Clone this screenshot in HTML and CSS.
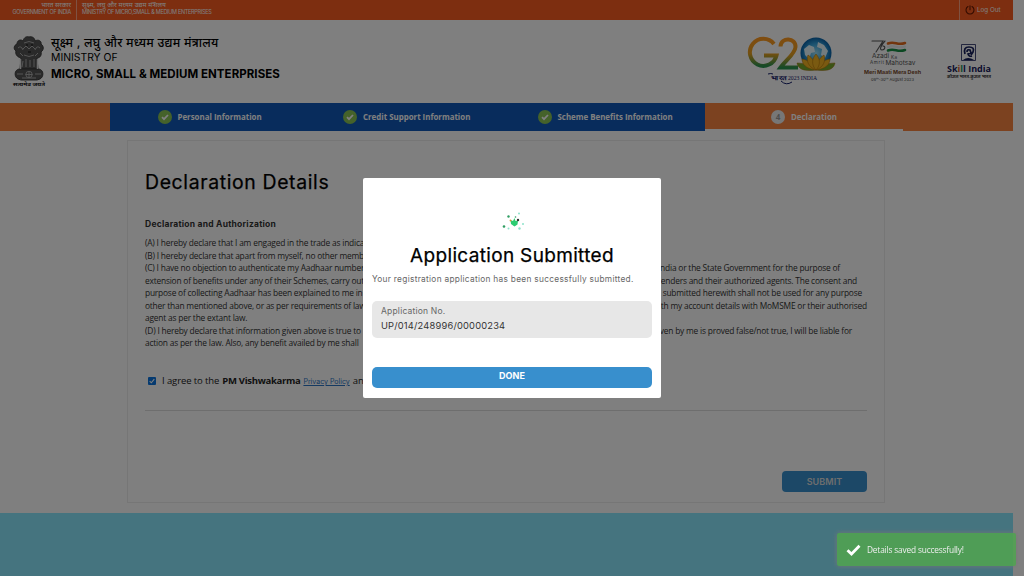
FILE: index.html
```html
<!DOCTYPE html>
<html lang="en">
<head>
<meta charset="utf-8">
<title>PM Vishwakarma - Declaration</title>
<link rel="stylesheet" href="styles.css">
</head>
<body>
<div class="page">
  <div class="topbar">
    <div class="gov gov-left"><span class="hi">भारत सरकार</span><span class="goi">GOVERNMENT OF INDIA</span></div>
    <div class="gov gov-right"><span class="hi hi2">सूक्ष्म, लघु और मध्यम उद्यम मंत्रालय</span><span class="msme">MINISTRY OF MICRO,SMALL &amp; MEDIUM ENTERPRISES</span></div>
    <div class="logout">
      <svg width="10" height="10" viewBox="0 0 10 10" fill="none" stroke="#661800" stroke-width="1.1" stroke-linecap="round"><path d="M3 1.6A4 4 0 1 0 7 1.6M5 .7v4"/></svg>
      <span>Log Out</span>
    </div>
  </div>
  <header class="header">
    <svg class="emblem" width="34" height="54" viewBox="0 0 34 54">
      <g fill="#555" stroke="#333" stroke-width=".9">
        <path d="M9 23C5 22 3 19 4 16C1 14 2 10 5 9C5 5 9 4 11 6C12 2 15 1 17 2C20 1 23 3 23 6C26 4 30 6 29 9C32 11 32 15 29 17C30 20 28 23 25 23L26 34H8Z"/>
        <path d="M7 34C2 35 2 42 6 44L9 45H25L28 44C32 42 32 35 27 34Z"/>
      </g>
      <g fill="none" stroke="#aaa" stroke-width="1">
        <circle cx="17" cy="39.5" r="3.2"/><path d="M17 36v7M13.500 39.500h7M5 39h6M23 39h6M10 43h14"/>
        <path d="M12 8q5-3 10 0M11 14l3-3 3 3 3-3 3 3M6 13q3-3 5 2M28 13q-3-3-5 2M12 20q5 3 10 0M14 24v8M18 25v7M22 24v8M11 26l-1 6M8 18l3 3M26 18l-3 3"/>
        <path d="M8.500 24v10M25.500 24v10" stroke="#ddd" stroke-width="1.500"/>
      </g>
      <path d="M14 10h2M19 10h2M16 17h3" stroke="#111"/>
      <text x="17" y="51" text-anchor="middle" textLength="32" lengthAdjust="spacingAndGlyphs" class="motto">सत्यमेव जयते</text>
    </svg>
    <div class="ministry">
      <span class="m-hi">सूक्ष्म , लघु और मध्यम उद्यम मंत्रालय</span>
      <span class="m-of">MINISTRY OF</span>
      <span class="m-name">MICRO, SMALL &amp; MEDIUM ENTERPRISES</span>
    </div>
    <div class="logos">
      <svg width="90" height="52" viewBox="0 0 90 52">
        <defs>
          <linearGradient id="g" x1="0" y1="0" x2="0" y2="1"><stop offset="0" stop-color="#ff9a20"/><stop offset=".55" stop-color="#e8a020"/><stop offset="1" stop-color="#2c9450"/></linearGradient>
          <radialGradient id="b"><stop offset="0" stop-color="#9ce0f8"/><stop offset=".6" stop-color="#36a5e0"/><stop offset="1" stop-color="#0862a8"/></radialGradient>
        </defs>
        <g fill="none" stroke="url(#g)" stroke-width="4">
          <path d="M27 9A13.500 13.500 0 1 0 29.500 20.500H17"/>
          <path d="M33.500 11.500C34 1.500 49 2.500 48.500 12C48 19 39 25 33.500 32.500H51"/>
        </g>
        <circle cx="69" cy="18" r="15.500" fill="url(#b)"/>
        <path d="M57 14l5-4 5 2 1 5-4 1-2 6-4-4zM71 7l6 3 4 6-3 7-4-3 1-6-5-2z" fill="#e7f8ff"/>
        <g fill="#f5b422" stroke="#a86e08" stroke-width=".5">
          <path d="M69 35C55 37 51 33 50 28C58 28 65 31 69 35C73 31 80 28 88 28C87 33 83 37 69 35Z" fill="#76a82b"/>
          <path d="M69 35C59 34 55 29 55 24C62 25 68 30 69 35C70 30 76 25 83 24C83 29 79 34 69 35Z"/>
          <path d="M69 35C61 32 59 25 61 20C66 23 69 29 69 35C69 29 72 23 77 20C79 25 77 32 69 35Z"/>
          <path d="M69 35C64 30 65 23 69 19C73 23 74 30 69 35Z"/>
        </g>
        <g class="g20-caption"><text x="24" y="45" textLength="15" lengthAdjust="spacingAndGlyphs" font-weight="bold">भारत</text><text x="41" y="44.500" textLength="29" lengthAdjust="spacingAndGlyphs">2023 INDIA</text></g>
        <path d="M21 39q3-1 5 0M34 46q5 5 11 1" fill="none" stroke="#15206c" stroke-width="1"/>
      </svg>
      <svg width="60" height="44" viewBox="0 0 60 44">
        <g fill="none" stroke-linecap="round">
          <path d="M8 2h11L12 13M21 2c-4 4-6 9-3 9s4-4 1-4" stroke="#555" stroke-width="1.100"/>
          <path d="M24 4.500c7-3 9 2.500 17-.5" stroke="#e46b1c" stroke-width="2.600"/>
          <path d="M24 8c7-3 9 2.500 17-.5" stroke="#eee" stroke-width="2"/>
          <path d="M24 11.500c7-3 9 2.500 17-.5" stroke="#189044" stroke-width="2.600"/>
        </g>
        <g class="azadi"><text x="8" y="19" textLength="17">Azadi</text><text x="27" y="20" textLength="6" class="amrit">Ka</text><text x="6" y="25" textLength="14" class="amrit">Amrit</text><text x="21.500" y="26.300" textLength="30">Mahotsav</text></g>
        <text x="0" y="35" textLength="57" lengthAdjust="spacingAndGlyphs" class="desh">Meri Maati Mera Desh</text>
        <text x="7" y="42" textLength="43" class="dates">09ᵗʰ-30ᵗʰ August 2023</text>
      </svg>
      <svg width="46" height="38" viewBox="0 0 46 38">
        <path d="M15.500 1.500h14v16h-14z" fill="none" stroke="#17205c" stroke-width=".8"/>
        <path d="M19 11q-2-7 4-7t4 5l-2 3M21 9q0-3 3-2l1 3-3 1q1 3 4 2" fill="none" stroke="#17205c" stroke-width="1.700"/>
        <path d="M17 17q5-4 11 0z" fill="#17205c"/>
        <text x="1" y="28.500" textLength="44" lengthAdjust="spacingAndGlyphs" class="skill">Sk<tspan fill="#d8601b">i</tspan><tspan fill="#259556">l</tspan>l India</text>
        <text x="1" y="35" textLength="44" lengthAdjust="spacingAndGlyphs" class="skill-hi">कौशल भारत-कुशल भारत</text>
      </svg>
    </div>
  </header>
  <nav class="steps">
    <div class="step s1"><i class="check"><svg viewBox="0 0 14 14"><path d="M4 7.200l2 2 4-4.200"/></svg></i><span>Personal Information</span></div>
    <div class="step s2"><i class="check"><svg viewBox="0 0 14 14"><path d="M4 7.200l2 2 4-4.200"/></svg></i><span>Credit Support Information</span></div>
    <div class="step s3"><i class="check"><svg viewBox="0 0 14 14"><path d="M4 7.200l2 2 4-4.200"/></svg></i><span>Scheme Benefits Information</span></div>
    <div class="step s4"><i class="num">4</i><span>Declaration</span></div>
  </nav>
  <main class="card">
    <h1>Declaration Details</h1>
    <h2>Declaration and Authorization</h2>
    <div class="terms">
      <p><span>(A) I hereby declare that I am engaged in the trade as indicated</span></p>
      <p><span>(B) I hereby declare that apart from myself, no other member</span></p>
      <p class="e1"><span>(C) I have no objection to authenticate my Aadhaar number</span><span>of India or the State Government for the purpose of</span></p>
      <p class="e2"><span>extension of benefits under any of their Schemes, carry out</span><span>lenders and their authorized agents. The consent and</span></p>
      <p class="e3"><span>purpose of collecting Aadhaar has been explained to me in</span><span>submitted herewith shall not be used for any purpose</span></p>
      <p><span>other than mentioned above, or as per requirements of law</span><span>with my account details with MoMSME or their authorised</span></p>
      <p><span>agent as per the extant law.</span></p>
      <p class="e4"><span>(D) I hereby declare that information given above is true to</span><span>given by me is proved false/not true, I will be liable for</span></p>
      <p><span>action as per the law. Also, any benefit availed by me shall</span></p>
    </div>
    <div class="agree">
      <i class="box"><svg viewBox="0 0 8 8"><path d="M1.700 4.200l1.600 1.600 3-3.600"/></svg></i>
      <span class="ag1">I agree to the</span><b>PM Vishwakarma</b><a>Privacy Policy</a><span>and</span>
    </div>
    <div class="actions"><button class="submit">SUBMIT</button></div>
  </main>
  <footer class="footer"></footer>
</div>
<div class="overlay">
  <section class="modal">
    <svg class="confetti" width="24" height="22" viewBox="0 0 24 22">
      <path d="M8.500 9l2.500 1 1.500-3 1 3 2.500-.5-.5 4-3 2-3.500-2.500z" fill="#2ccc71"/>
      <g fill="#2f9d62"><circle cx="6.500" cy="5.500" r="1.200"/><circle cx="2" cy="15.500" r="1.300"/><circle cx="13.500" cy="6" r=".8"/></g>
      <circle cx="16" cy="9" r="1.200" fill="#333"/><circle cx="8.500" cy="9.500" r=".9" fill="#d99232"/>
      <g fill="#8ee3cb"><circle cx="17" cy="2.500" r="1"/><circle cx="21" cy="13" r="1"/><circle cx="17.500" cy="17.500" r="1.200"/><circle cx="6.500" cy="17.500" r="1"/></g>
    </svg>
    <h3>Application Submitted</h3>
    <p class="note">Your registration application has been successfully submitted.</p>
    <div class="field"><span class="label">Application No.</span><span class="value">UP/014/248996/00000234</span></div>
    <button class="done">DONE</button>
  </section>
</div>
<div class="toast">
  <svg width="15" height="12" viewBox="0 0 15 12"><path d="M1.500 6.200l4 3.800L13.500 1.800" fill="none" stroke="#fff" stroke-width="2.800"/></svg>
  <span>Details saved successfully!</span>
</div>
</body>
</html>
```
FILE: styles.css
```css
* { box-sizing: border-box; }
body { margin: 0; width: 1024px; height: 576px; overflow: hidden; background: #fff; font-family: Inter, "Noto Sans", sans-serif; color: #000; }
span, h1, h2, h3, p, b, a { white-space: nowrap; }
h1, h2, h3, p { margin: 0; }
button { border: 0; padding: 0; font-family: inherit; color: #fff; }
.page { width: 1013px; height: 576px; display: flex; flex-direction: column; }

.topbar { height: 20px; flex: none; display: flex; background: #fa5c20; color: #fff; font-size: 5.5px; letter-spacing: -.3px; }
.gov { display: flex; flex-direction: column; padding-top: 2px; line-height: 7px; }
.gov-left { width: 77px; padding-right: 5px; align-items: flex-end; border-right: 1px solid #ffa584; }
.gov-right { padding-left: 5px; }
.hi { font-size: 6.3px; letter-spacing: 0; }
.hi2 { font-size: 6.6px; }
.logout { margin-left: auto; width: 54px; padding-left: 5px; border-left: 1px solid #ffa584; display: flex; align-items: center; gap: 2px; font-size: 6.3px; letter-spacing: 0; }

.header { height: 83px; flex: none; display: flex; padding: 15px 21px 0 12px; }
.motto { font: bold 5px "Noto Sans", sans-serif; fill: #111; }
.ministry { display: flex; flex-direction: column; margin-left: 5px; color: #000; }
.m-hi { font-size: 12.2px; font-weight: 500; line-height: 15px; letter-spacing: .25px; }
.m-of { font-size: 10.4px; line-height: 15px; }
.m-name { font-size: 11.5px; line-height: 18px; font-weight: 700; letter-spacing: .06px; }
.logos { margin-left: auto; display: flex; align-items: flex-start; }
.logos svg:nth-child(2) { margin: 4px 22px 0 27px; }
.logos svg:nth-child(3) { margin-top: 8px; }
.g20-caption { font: 6px "Liberation Serif", serif; fill: #15206c; }
.azadi { font: 6.5px Inter, sans-serif; fill: #555; }
.amrit { font-size: 4.6px; }
.desh { font: bold 5px Inter, sans-serif; fill: #7a4b2c; }
.dates { font: 4px Inter, sans-serif; fill: #4a4a4a; }
.skill { font: bold 8.5px "Open Sans", sans-serif; fill: #17205c; }
.skill-hi { font: bold 4px "Noto Sans", sans-serif; fill: #333; }

.steps { height: 28px; flex: none; display: flex; padding-left: 110px; background: #f88440; font-family: "Open Sans", sans-serif; font-size: 7.9px; font-weight: 700; color: #fff; }
.step { display: flex; align-items: center; background: #1058b8; gap: 6px; }
.s1 { width: 198px; padding-left: 47.5px; }
.s2 { width: 198px; padding-left: 35px; }
.s3 { width: 199px; padding-left: 31.5px; }
.s4 { width: 198px; padding-left: 66px; padding-top: 2px; background: transparent; border-bottom: 2px solid #fff; }
.check, .num { width: 14px; height: 14px; border-radius: 50%; flex: none; font-style: normal; }
.check { background: #8ac454; }
.check svg { display: block; }
.check path { fill: none; stroke: #fff; stroke-width: 1.8; }
.num { background: #eee; color: #999; text-align: center; line-height: 14px; font-size: 8px; }

.card { margin: 9px 0 0 127px; width: 758px; height: 363px; flex: none; border: 1px solid #ededed; padding: 29px 17px 0; display: flex; flex-direction: column; }
.card h1 { font-size: 19.4px; line-height: 24px; font-weight: 400; letter-spacing: .65px; -webkit-text-stroke: .25px #000; }
.card h2 { margin-top: 23px; font-size: 8.5px; line-height: 14px; font-weight: 700; letter-spacing: .24px; color: #333; }
.terms { margin-top: 6px; font-family: "Open Sans", sans-serif; font-size: 8.4px; line-height: 12.55px; letter-spacing: -.2px; color: #333; }
.terms p { display: flex; justify-content: space-between; height: 12.55px; }
.e1 { padding-right: 27px; }
.e2 { padding-right: 10px; }
.e3 { padding-right: 5px; }
.e4 { padding-right: 15px; }
.agree { height: 61px; flex: none; padding: 24px 0 0 3px; display: flex; align-items: flex-start; gap: 3px; border-bottom: 1px solid #ddd; font-family: "Open Sans", sans-serif; font-size: 9.5px; line-height: 14px; letter-spacing: -.1px; color: #222; }
.agree b { letter-spacing: -.3px; }
.box { width: 8px; height: 8px; margin: 3px 3px 0 0; border-radius: 1px; background: #0b75e0; }
.box svg { display: block; }
.box path { fill: none; stroke: #fff; stroke-width: 1.1; }
.agree a { font-family: Inter, sans-serif; font-size: 7px; line-height: 16px; letter-spacing: 0; color: #2b74c4; text-decoration: underline; }
.actions { margin-top: 60px; display: flex; justify-content: flex-end; }
.submit { width: 85px; height: 21px; border-radius: 4px; background: #3890ce; font-size: 9px; font-weight: 600; letter-spacing: .1px; color: #ddd; }
.footer { margin-top: 10px; flex: 1; background: #8ae8fe; }

.overlay { position: fixed; inset: 0; background: rgba(0,0,0,.5); display: flex; justify-content: center; align-items: center; }
.modal { width: 298px; height: 220px; border-radius: 2px; background: #fff; padding: 33px 9px 0; display: flex; flex-direction: column; }
.confetti { align-self: center; margin-left: 4px; }
.modal h3 { margin-top: 10px; text-align: center; font-size: 19px; line-height: 26px; font-weight: 400; letter-spacing: .33px; -webkit-text-stroke: .25px #000; }
.note { margin-top: 4px; font-size: 8.3px; line-height: 12px; letter-spacing: .3px; color: #666; }
.field { margin-top: 16px; height: 37px; padding: 4px 9px; border-radius: 5px; background: #e7e7e7; display: flex; flex-direction: column; }
.label { font-size: 8.5px; line-height: 13px; letter-spacing: .2px; color: #666; }
.value { font-size: 9.3px; line-height: 15px; letter-spacing: .2px; color: #333; }
.done { margin-top: 29px; height: 21px; padding-bottom: 4px; border-radius: 5px; background: #388fcd; font-size: 9px; font-weight: 700; }

.toast { position: fixed; left: 837px; top: 533px; width: 179px; height: 33px; padding-left: 9px; display: flex; align-items: center; gap: 6px; border-radius: 2px; background: rgba(81,163,81,.88); box-shadow: 0 0 5px #777; color: #eee; font-family: "Open Sans", sans-serif; font-size: 8.3px; letter-spacing: -.16px; }
```
